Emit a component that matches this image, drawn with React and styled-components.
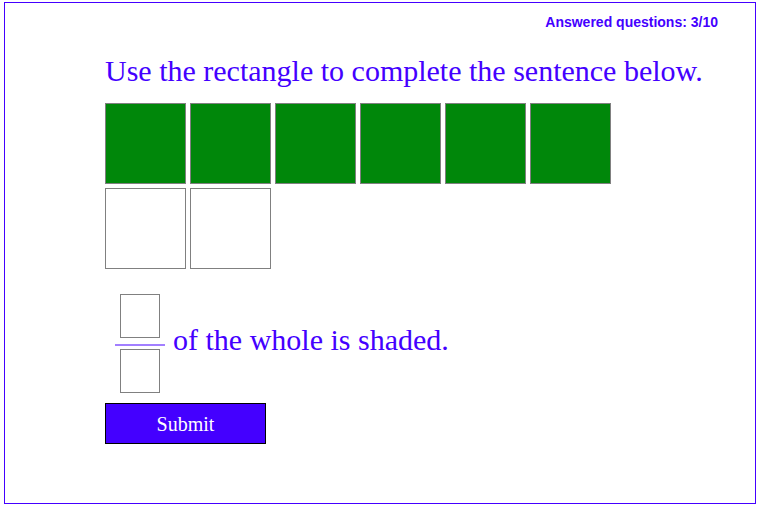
import React from "react";
import styled, { createGlobalStyle } from "styled-components";

const Global = createGlobalStyle`
  html, body { margin: 0; padding: 0; background: #ffffff; }
`;

const BLUE = "#4400ff";

const Frame = styled.div`
  box-sizing: border-box;
  width: 752px;
  height: 502px;
  margin: 2px 0 0 4px;
  border: 1px solid ${BLUE};
  padding: 12px 37px 0 100px;
  font-family: "Liberation Serif", "Times New Roman", serif;
  color: ${BLUE};
`;

const Progress = styled.div`
  text-align: right;
  font-family: "Liberation Sans", Arial, sans-serif;
  font-weight: bold;
  font-size: 14px;
  line-height: 15px;
`;

const Heading = styled.h1`
  margin: 25px 0 0 0;
  font-size: 30px;
  font-weight: normal;
  line-height: 32px;
  white-space: nowrap;
`;

const Grid = styled.div`
  display: grid;
  grid-template-columns: repeat(6, 81px);
  grid-auto-rows: 81px;
  gap: 4px;
  margin-top: 16px;
`;

const Cell = styled.div`
  box-sizing: border-box;
  border: 1px solid #808080;
  background: ${(p) => (p.$filled ? "#00870a" : "#ffffff")};
`;

const Sentence = styled.div`
  display: flex;
  align-items: center;
  margin-top: 25px;
  padding-left: 10px;
`;

const Fraction = styled.div`
  display: flex;
  flex-direction: column;
  align-items: center;
  width: 50px;
`;

const AnswerBox = styled.div`
  box-sizing: border-box;
  width: 40px;
  height: 44px;
  border: 1px solid #808080;
  background: #fff;
`;

const Bar = styled.div`
  width: 50px;
  height: 2px;
  background: #a27fff;
  margin: 6px 0 3px 0;
`;

const SentenceText = styled.span`
  font-size: 30px;
  line-height: 32px;
  margin-left: 8px;
  margin-bottom: 8px;
  white-space: nowrap;
`;

const SubmitButton = styled.button`
  display: block;
  box-sizing: border-box;
  width: 161px;
  height: 41px;
  margin-top: 10px;
  padding: 2px 0 0 0;
  border: 1px solid #000;
  background: ${BLUE};
  color: #fff;
  font-family: "Liberation Serif", "Times New Roman", serif;
  font-size: 20px;
  cursor: pointer;
`;

export default function App() {
  const cells = Array.from({ length: 8 }, (_, i) => i < 6);
  return (
    <>
      <Global />
      <Frame>
        <Progress>Answered questions: 3/10</Progress>
        <Heading>Use the rectangle to complete the sentence below.</Heading>
        <Grid>
          {cells.map((f, i) => (
            <Cell key={i} $filled={f} />
          ))}
        </Grid>
        <Sentence>
          <Fraction>
            <AnswerBox />
            <Bar />
            <AnswerBox />
          </Fraction>
          <SentenceText>of the whole is shaded.</SentenceText>
        </Sentence>
        <SubmitButton>Submit</SubmitButton>
      </Frame>
    </>
  );
}
